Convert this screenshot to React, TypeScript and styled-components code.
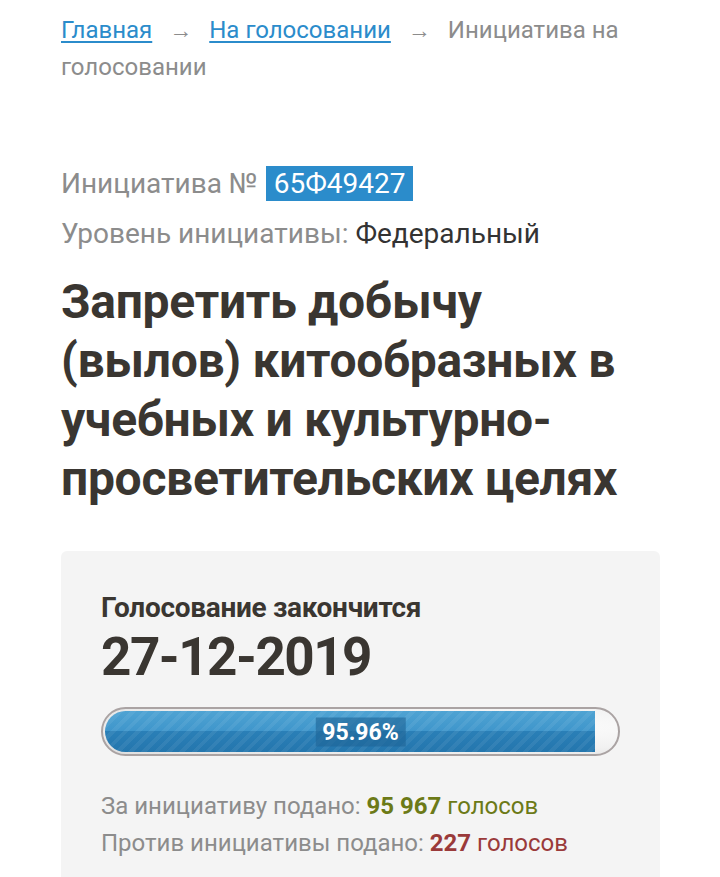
import React from "react";
import styled, { createGlobalStyle } from "styled-components";

const Global = createGlobalStyle`
  html, body { margin: 0; padding: 0; background: #fff; }
  body { font-family: Roboto, "Noto Sans", sans-serif; -webkit-font-smoothing: antialiased; }
`;

const Page = styled.div`
  padding: 12px 60px 0 61px;
  box-sizing: border-box;
  width: 720px;
`;

const Crumbs = styled.nav`
  font-size: 24px;
  line-height: 36px;
  color: #8c8c8c;
`;

const CrumbLink = styled.a`
  color: #2b8ccb;
  text-decoration: underline;
  text-underline-offset: 3px;
  text-decoration-thickness: 2px;
`;

const Arrow = styled.span`
  color: #8c8c8c;
  margin: 0 17px;
  font-size: 23px;
`;

const Current = styled.span`
  color: #8c8c8c;
`;

const Meta = styled.div`
  margin-top: 81px;
  display: flex;
  flex-direction: column;
  gap: 16px;
`;

const NumberRow = styled.div`
  display: flex;
  align-items: center;
  font-size: 28px;
  height: 35px;
  color: #8c8c8c;
`;

const Badge = styled.span`
  background: #2b8ccb;
  color: #fff;
  padding: 0 8px;
  height: 35px;
  line-height: 35px;
  margin-left: 8px;
`;

const LevelRow = styled.div`
  font-size: 28px;
  line-height: 33px;
  color: #8c8c8c;
`;

const LevelValue = styled.span`
  color: #333;
`;

const Title = styled.h1`
  margin: 22px 0 0;
  font-size: 48px;
  line-height: 59px;
  font-weight: 700;
  letter-spacing: -0.3px;
  color: #3a3631;
`;

const Card = styled.section`
  margin-top: 43px;
  background: #f4f4f4;
  border-radius: 6px 6px 0 0;
  padding: 41px 40px 30px;
`;

const EndsLabel = styled.div`
  font-size: 28px;
  font-weight: 700;
  color: #3a3631;
  line-height: 32px;
  letter-spacing: -0.3px;
`;

const EndsDate = styled.div`
  margin-top: 3px;
  font-size: 53px;
  font-weight: 700;
  color: #3a3631;
  line-height: 60px;
  letter-spacing: -1.5px;
`;

const Track = styled.div`
  margin-top: 20px;
  height: 49px;
  box-sizing: border-box;
  border: 2px solid #aaa3a3;
  border-radius: 25px;
  padding: 2px;
  background: radial-gradient(ellipse at 70% 40%, #ffffff 0%, #f1f1f1 60%, #dedede 100%);
  position: relative;
  overflow: hidden;
`;

const Fill = styled.div`
  height: 100%;
  border-radius: 21px 0 0 21px;
  background:
    repeating-linear-gradient(135deg, rgba(255,255,255,0.06) 0 4px, rgba(255,255,255,0) 4px 9px),
    linear-gradient(to bottom, #4fa3d3 0%, #3f96cb 48%, #2a7fb7 50%, #2476ad 100%);
`;

const Percent = styled.span`
  position: absolute;
  left: 50%;
  top: 50%;
  transform: translate(-50%, -50%);
  background: rgba(30, 100, 150, 0.6);
  color: #fff;
  font-weight: 700;
  font-size: 23px;
  padding: 0 7px;
  line-height: 29px;
`;

const Votes = styled.div`
  margin-top: 32px;
  font-size: 24px;
  line-height: 37px;
  color: #8c8c8c;
`;

const Count = styled.span<{ $color: string }>`
  color: ${(p) => p.$color};
  b { font-weight: 700; }
`;

export default function App() {
  const pct = 95.96;
  return (
    <Page>
      <Global />
      <Crumbs>
        <CrumbLink>Главная</CrumbLink>
        <Arrow>→</Arrow>
        <CrumbLink>На голосовании</CrumbLink>
        <Arrow>→</Arrow>
        <Current>Инициатива на</Current> <Current>голосовании</Current>
      </Crumbs>
      <Meta>
        <NumberRow>
          Инициатива №<Badge>65Ф49427</Badge>
        </NumberRow>
        <LevelRow>
          Уровень инициативы: <LevelValue>Федеральный</LevelValue>
        </LevelRow>
      </Meta>
      <Title>Запретить добычу (вылов) китообразных в учебных и культурно-просветительских целях</Title>
      <Card>
        <EndsLabel>Голосование закончится</EndsLabel>
        <EndsDate>27-12-2019</EndsDate>
        <Track>
          <Fill style={{ width: `${pct}%` }} />
          <Percent>95.96%</Percent>
        </Track>
        <Votes>
          <div>
            За инициативу подано: <Count $color="#6c7a17"><b>95 967</b> голосов</Count>
          </div>
          <div>
            Против инициативы подано: <Count $color="#9a3a3a"><b>227</b> голосов</Count>
          </div>
        </Votes>
      </Card>
    </Page>
  );
}
